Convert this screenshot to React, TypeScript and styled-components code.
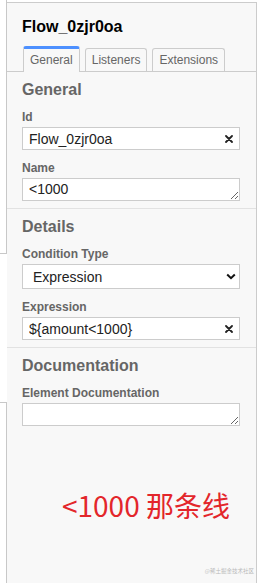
import React from "react";
import styled, { createGlobalStyle } from "styled-components";

const GlobalStyle = createGlobalStyle`
  html, body {
    margin: 0;
    padding: 0;
    background: #fff;
  }
  body {
    font-family: "Liberation Sans", Arial, sans-serif;
  }
`;

const TABS = ["General", "Listeners", "Extensions"];

function ClearIcon() {
  return (
    <svg width="8" height="8" viewBox="0 0 8 8">
      <path d="M1 1 L7 7 M7 1 L1 7" stroke="#222" strokeWidth="1.8" strokeLinecap="round" />
    </svg>
  );
}

function ChevronIcon() {
  return (
    <svg width="10" height="7" viewBox="0 0 10 7">
      <path d="M1.2 1.5 L5 5.2 L8.8 1.5" stroke="#111" strokeWidth="2" fill="none" />
    </svg>
  );
}

function App() {
  return (
    <Page>
      <GlobalStyle />
      <Canvas>
        <Shape $top={-5} $height={259} />
        <Shape $top={402} $height={200} />
      </Canvas>
      <Panel>
        <Title>Flow_0zjr0oa</Title>
        <TabBar>
          {TABS.map((t, i) => (
            <Tab key={t} $active={i === 0}>
              {t}
            </Tab>
          ))}
        </TabBar>

        <Group>
          <GroupTitle>General</GroupTitle>
          <Entry>
            <Label>Id</Label>
            <Field>
              <TextInput defaultValue="Flow_0zjr0oa" />
              <ClearButton>
                <ClearIcon />
              </ClearButton>
            </Field>
          </Entry>
          <Entry>
            <Label>Name</Label>
            <Field>
              <TextArea defaultValue="<1000" />
            </Field>
          </Entry>
        </Group>

        <Group>
          <GroupTitle>Details</GroupTitle>
          <Entry>
            <Label>Condition Type</Label>
            <Field>
              <Select defaultValue="expression">
                <option value="expression">Expression</option>
                <option value="script">Script</option>
              </Select>
              <SelectArrow>
                <ChevronIcon />
              </SelectArrow>
            </Field>
          </Entry>
          <Entry>
            <Label>Expression</Label>
            <Field>
              <TextInput defaultValue="${amount<1000}" />
              <ClearButton>
                <ClearIcon />
              </ClearButton>
            </Field>
          </Entry>
        </Group>

        <Group $last>
          <GroupTitle>Documentation</GroupTitle>
          <Entry>
            <Label>Element Documentation</Label>
            <Field>
              <TextArea defaultValue="" />
            </Field>
          </Entry>
        </Group>

        <Note>&lt;1000 那条线</Note>
        <Watermark>@稀土掘金技术社区</Watermark>
      </Panel>
    </Page>
  );
}

export default App;

const Page = styled.div`
  display: flex;
  width: 262px;
  height: 583px;
  overflow: hidden;
  background: #fff;
`;

const Canvas = styled.div`
  position: relative;
  width: 7px;
  flex: none;
`;

const Shape = styled.div<{ $top: number; $height: number }>`
  position: absolute;
  left: -19px;
  width: 26px;
  top: ${(p) => p.$top}px;
  height: ${(p) => p.$height}px;
  border: 1px solid #c8c8c8;
  box-sizing: border-box;
`;

const Panel = styled.div`
  position: relative;
  width: 250px;
  flex: none;
  box-sizing: border-box;
  margin-top: 2px;
  border-top: 1px solid #ccc;
  border-right: 1px solid #ccc;
  background: #f8f8f8;
  display: flex;
  flex-direction: column;
`;

const Title = styled.div`
  padding: 14px 15px 0;
  font-size: 16px;
  line-height: 20px;
  font-weight: bold;
  color: #000;
`;

const TabBar = styled.div`
  margin-top: 9px;
  height: 25px;
  display: flex;
  align-items: flex-end;
  gap: 5px;
  padding: 0 16px;
  border-bottom: 1px solid #ccc;
`;

const Tab = styled.div<{ $active?: boolean }>`
  position: relative;
  box-sizing: border-box;
  padding: 4px 6px ${(p) => (p.$active ? "5px" : "4px")};
  border: 1px solid #ccc;
  border-bottom: none;
  border-top: ${(p) => (p.$active ? "3px solid #4d90ff" : "1px solid #ccc")};
  border-radius: 3px 3px 0 0;
  margin-bottom: ${(p) => (p.$active ? "-1px" : "0")};
  background: #f8f8f8;
  font-size: 12px;
  line-height: 14px;
  color: #666;
`;

const Group = styled.div<{ $last?: boolean }>`
  padding: 8px 16px 7px 15px;
  border-bottom: ${(p) => (p.$last ? "none" : "1px solid #e2e2e2")};
`;

const GroupTitle = styled.div`
  font-size: 16px;
  line-height: 20px;
  font-weight: bold;
  color: #666;
  margin-bottom: 9px;
`;

const Entry = styled.div`
  & + & {
    margin-top: 10px;
  }
`;

const Label = styled.div`
  font-size: 12px;
  line-height: 16px;
  font-weight: bold;
  color: #666;
  margin-bottom: 2px;
`;

const Field = styled.div`
  position: relative;
`;

const TextInput = styled.input`
  display: block;
  width: 100%;
  height: 23px;
  box-sizing: border-box;
  border: 1px solid #ccc;
  border-radius: 0;
  background: #fff;
  padding: 0 24px 0 6px;
  font-family: "Liberation Sans", Arial, sans-serif;
  font-size: 14px;
  color: #222;
  outline: none;
`;

const TextArea = styled.textarea`
  display: block;
  width: 100%;
  height: 23px;
  box-sizing: border-box;
  border: 1px solid #ccc;
  border-radius: 0;
  background: #fff;
  padding: 2px 6px 0;
  font-family: "Liberation Sans", Arial, sans-serif;
  font-size: 14px;
  line-height: 17px;
  color: #222;
  resize: vertical;
  overflow: hidden;
  outline: none;
`;

const Select = styled.select`
  display: block;
  width: 100%;
  height: 25px;
  box-sizing: border-box;
  border: 1px solid #ccc;
  border-radius: 0;
  background: #fff;
  padding: 0 24px 0 10px;
  font-family: "Liberation Sans", Arial, sans-serif;
  font-size: 14px;
  color: #222;
  appearance: none;
  outline: none;
`;

const ClearButton = styled.span`
  position: absolute;
  right: 7px;
  top: 8px;
  display: flex;
  line-height: 0;
`;

const SelectArrow = styled.span`
  position: absolute;
  right: 4px;
  top: 9px;
  display: flex;
  line-height: 0;
  pointer-events: none;
`;

const Note = styled.div`
  margin-top: 55px;
  padding-left: 55px;
  font-family: "Noto Sans CJK SC", "Noto Sans", sans-serif;
  font-size: 28px;
  line-height: 34px;
  color: #e3262b;
  white-space: nowrap;
`;

const Watermark = styled.div`
  position: absolute;
  right: 2px;
  bottom: 8px;
  font-family: "Noto Sans CJK SC", sans-serif;
  font-size: 5.5px;
  line-height: 7px;
  color: #b8b8b8;
`;
